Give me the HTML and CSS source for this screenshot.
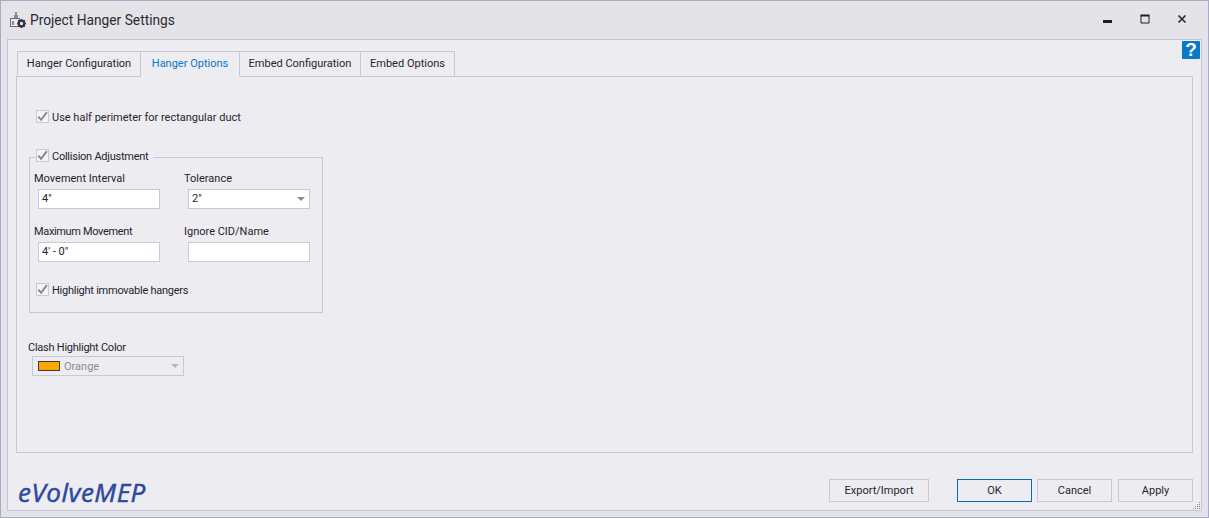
FILE: index.html
```html
<!DOCTYPE html>
<html lang="en">
<head>
<meta charset="utf-8">
<title>Project Hanger Settings</title>
<link rel="stylesheet" href="styles.css">
</head>
<body>
<div class="window">
  <header class="titlebar">
    <svg class="app-icon" width="18" height="18" viewBox="0 0 18 18">
      <path d="M6 1h2v3h1v3H5V4h1z" fill="#8a8a92"/>
      <rect x="1.500" y="7.500" width="9" height="8" fill="#e9e9ee" stroke="#6d6d75"/>
      <rect x="3" y="10" width="2" height="4" fill="#8a8a92"/>
      <circle cx="12.500" cy="12.500" r="2.800" fill="none" stroke="#34343c" stroke-width="2.200"/>
      <path d="M12.500 8v2M12.500 15v2M8 12.500h2M15 12.500h2M9.300 9.300l1.400 1.400M14.300 14.300l1.400 1.400M9.300 15.700l1.400-1.400M14.300 10.700l1.400-1.400" stroke="#34343c" stroke-width="1.500"/>
    </svg>
    <span class="title">Project Hanger Settings</span>
    <div class="window-controls">
      <svg width="10" height="10" viewBox="0 0 10 10"><rect x="0" y="6" width="9" height="3" fill="#1f1f24"/></svg>
      <svg width="10" height="10" viewBox="0 0 10 10"><path d="M1 1.500h8v7.500H1z" fill="none" stroke="#1f1f24"/><rect x="0.500" y="0.500" width="9" height="2" fill="#1f1f24"/></svg>
      <svg width="10" height="10" viewBox="0 0 10 10"><path d="M1.500 1.500l7 7M8.500 1.500l-7 7" stroke="#2b2b30" stroke-width="1.700"/></svg>
    </div>
  </header>

  <main class="panel">
    <div class="help">?</div>
    <nav class="tabs">
      <div class="tab tab-1">Hanger Configuration</div>
      <div class="tab tab-2 active">Hanger Options</div>
      <div class="tab tab-3">Embed Configuration</div>
      <div class="tab tab-4">Embed Options</div>
    </nav>

    <section class="tab-page">
      <label class="check half-perimeter"><span class="box"><svg width="11" height="11" viewBox="0 0 10 10"><path d="M1.200 5.200l2.500 2.800L9 1" fill="none" stroke="#85858c" stroke-width="1.700"/></svg></span>Use half perimeter for rectangular duct</label>

      <div class="group">
        <label class="check group-legend tight"><span class="box"><svg width="11" height="11" viewBox="0 0 10 10"><path d="M1.200 5.200l2.500 2.800L9 1" fill="none" stroke="#85858c" stroke-width="1.700"/></svg></span>Collision Adjustment</label>
        <div class="fields">
          <div class="field">
            <div class="field-label">Movement Interval</div>
            <div class="input">4"</div>
          </div>
          <div class="field">
            <div class="field-label">Tolerance</div>
            <div class="input">2"<span class="arrow"></span></div>
          </div>
          <div class="field">
            <div class="field-label tighter">Maximum Movement</div>
            <div class="input">4' - 0"</div>
          </div>
          <div class="field">
            <div class="field-label">Ignore CID/Name</div>
            <div class="input"></div>
          </div>
        </div>
        <label class="check highlight tight"><span class="box"><svg width="11" height="11" viewBox="0 0 10 10"><path d="M1.200 5.200l2.500 2.800L9 1" fill="none" stroke="#85858c" stroke-width="1.700"/></svg></span>Highlight immovable hangers</label>
      </div>

      <div class="clash">
        <div class="clash-label tight">Clash Highlight Color</div>
        <div class="color-combo"><span class="swatch"></span>Orange<span class="arrow arrow-disabled"></span></div>
      </div>
    </section>

    <footer class="footer">
      <div class="logo">eVolveMEP</div>
      <div class="buttons">
        <button class="btn btn-export">Export/Import</button>
        <button class="btn btn-ok">OK</button>
        <button class="btn">Cancel</button>
        <button class="btn btn-apply">Apply</button>
      </div>
    </footer>
    <svg class="grip" width="8" height="8" viewBox="0 0 8 8"><path d="M6 0h1v1H6zM4 2h1v1H4zM6 2h1v1H6zM2 4h1v1H2zM4 4h1v1H4zM6 4h1v1H6zM0 6h1v1H0zM2 6h1v1H2zM4 6h1v1H4zM6 6h1v1H6z" fill="#8d8d98"/></svg>
  </main>
</div>
</body>
</html>
```
FILE: styles.css
```css
* { box-sizing: border-box; }
html, body { margin: 0; padding: 0; }
body {
  width: 1209px;
  height: 518px;
  overflow: hidden;
  font-family: Roboto, "Open Sans", sans-serif;
  font-size: 11px;
  color: #25252c;
}
.tight { letter-spacing: -0.25px; }
.tighter { letter-spacing: -0.35px; }
.window {
  width: 1209px;
  height: 518px;
  display: flex;
  flex-direction: column;
  background: #e3e3e8;
  border: 1px solid #a7abc6;
  padding: 0 6px 6px;
}
.titlebar {
  height: 38px;
  flex: none;
  display: flex;
  align-items: center;
  padding-left: 2px;
}
.app-icon { flex: none; margin-right: 3px; }
.title { font-size: 13.75px; color: #2b2b33; }
.window-controls {
  margin-left: auto;
  display: flex;
  gap: 27px;
  padding-right: 15px;
  margin-top: -2px;
}
.panel {
  position: relative;
  flex: 1;
  background: #edecf1;
  border: 1px solid #c5c5d6;
  padding: 11px 8px 8px;
  display: flex;
  flex-direction: column;
}
.help {
  position: absolute;
  top: 1px;
  right: 1px;
  width: 18px;
  height: 18px;
  background: #0a78c8;
  border-radius: 1px;
  color: #fff;
  font: bold 19px/18px "Liberation Sans", sans-serif;
  text-align: center;
}
.tabs {
  display: flex;
  height: 26px;
  padding-left: 1px;
  flex: none;
  margin-bottom: -1px;
  position: relative;
}
.tab {
  border: 1px solid #c8c8d8;
  border-bottom: 1px solid #c8c8d8;
  border-left-width: 0;
  background: #edecf1;
  display: flex;
  align-items: center;
  justify-content: center;
  white-space: nowrap;
  padding-bottom: 2px;
}
.tab-1 { width: 124px; border-left-width: 1px; }
.tab-2 { width: 99px; }
.tab-3 { width: 121px; }
.tab-4 { width: 94px; }
.tab.active { color: #0a78c8; border-bottom-color: #edecf1; }
.tab-page {
  height: 377px;
  flex: none;
  border: 1px solid #c8c8d8;
  padding: 32px 12px 0 11px;
}
.check {
  display: flex;
  align-items: center;
  height: 14px;
  padding-top: 2px;
  white-space: nowrap;
}
.box {
  width: 13px;
  height: 13px;
  border: 1px solid #c8c8d8;
  background: #f4f4f7;
  margin: 0 3px 2px 0;
  display: flex;
  align-items: center;
  justify-content: center;
  flex: none;
}
.half-perimeter { margin-left: 8px; }
.group {
  position: relative;
  width: 294px;
  height: 156px;
  margin-top: 34px;
  margin-left: 1px;
  border: 1px solid #c8c8d8;
  padding: 10px 0 0 4px;
}
.group-legend {
  position: absolute;
  top: -10px;
  left: 6px;
  padding-right: 5px;
  background: #edecf1;
}
.fields {
  display: grid;
  grid-template-columns: 150px 150px;
  row-gap: 12px;
}
.field-label { height: 20px; line-height: 22px; white-space: nowrap; }
.field .input { margin-left: 4px; }
.input {
  position: relative;
  width: 122px;
  height: 20px;
  background: #fff;
  border: 1px solid #c8c8d8;
  line-height: 18px;
  padding-left: 3px;
  margin-top: 1px;
}
.arrow {
  position: absolute;
  right: 4px;
  top: 7px;
  border-left: 4px solid transparent;
  border-right: 4px solid transparent;
  border-top: 4px solid #8a8a92;
}
.arrow-disabled { border-top-color: #b8b8c0; }
.highlight { margin: 20px 0 0 2px; }
.clash { margin-top: 26px; }
.clash-label { height: 16px; line-height: 18px; white-space: nowrap; }
.color-combo {
  position: relative;
  width: 152px;
  height: 20px;
  margin: 1px 0 0 4px;
  border: 1px solid #c8c8d8;
  display: flex;
  align-items: center;
  padding-left: 5px;
  color: #8b8b94;
}
.swatch {
  width: 22px;
  height: 10px;
  background: #ffa500;
  border: 1px solid #3a3a3a;
  margin-right: 4px;
  flex: none;
}
.footer {
  flex: 1;
  display: flex;
  align-items: flex-end;
  justify-content: space-between;
  padding-left: 2px;
}
.logo {
  font: italic 26px/26px "Open Sans", sans-serif;
  color: #2e479f;
  letter-spacing: 0.5px;
  margin-bottom: -3px;
  -webkit-text-stroke: 0.5px #2e479f;
}
.buttons { display: flex; gap: 5px; }
.btn {
  width: 75px;
  height: 23px;
  padding: 0;
  background: #edecf1;
  border: 1px solid #c8c8d8;
  font: inherit;
  color: inherit;
}
.btn-export { width: 100px; margin-right: 23px; }
.btn-ok { border-color: #0a6cb5; }
.btn-apply { margin-left: 1px; }
.grip { position: absolute; right: 0; bottom: 0; }
```
